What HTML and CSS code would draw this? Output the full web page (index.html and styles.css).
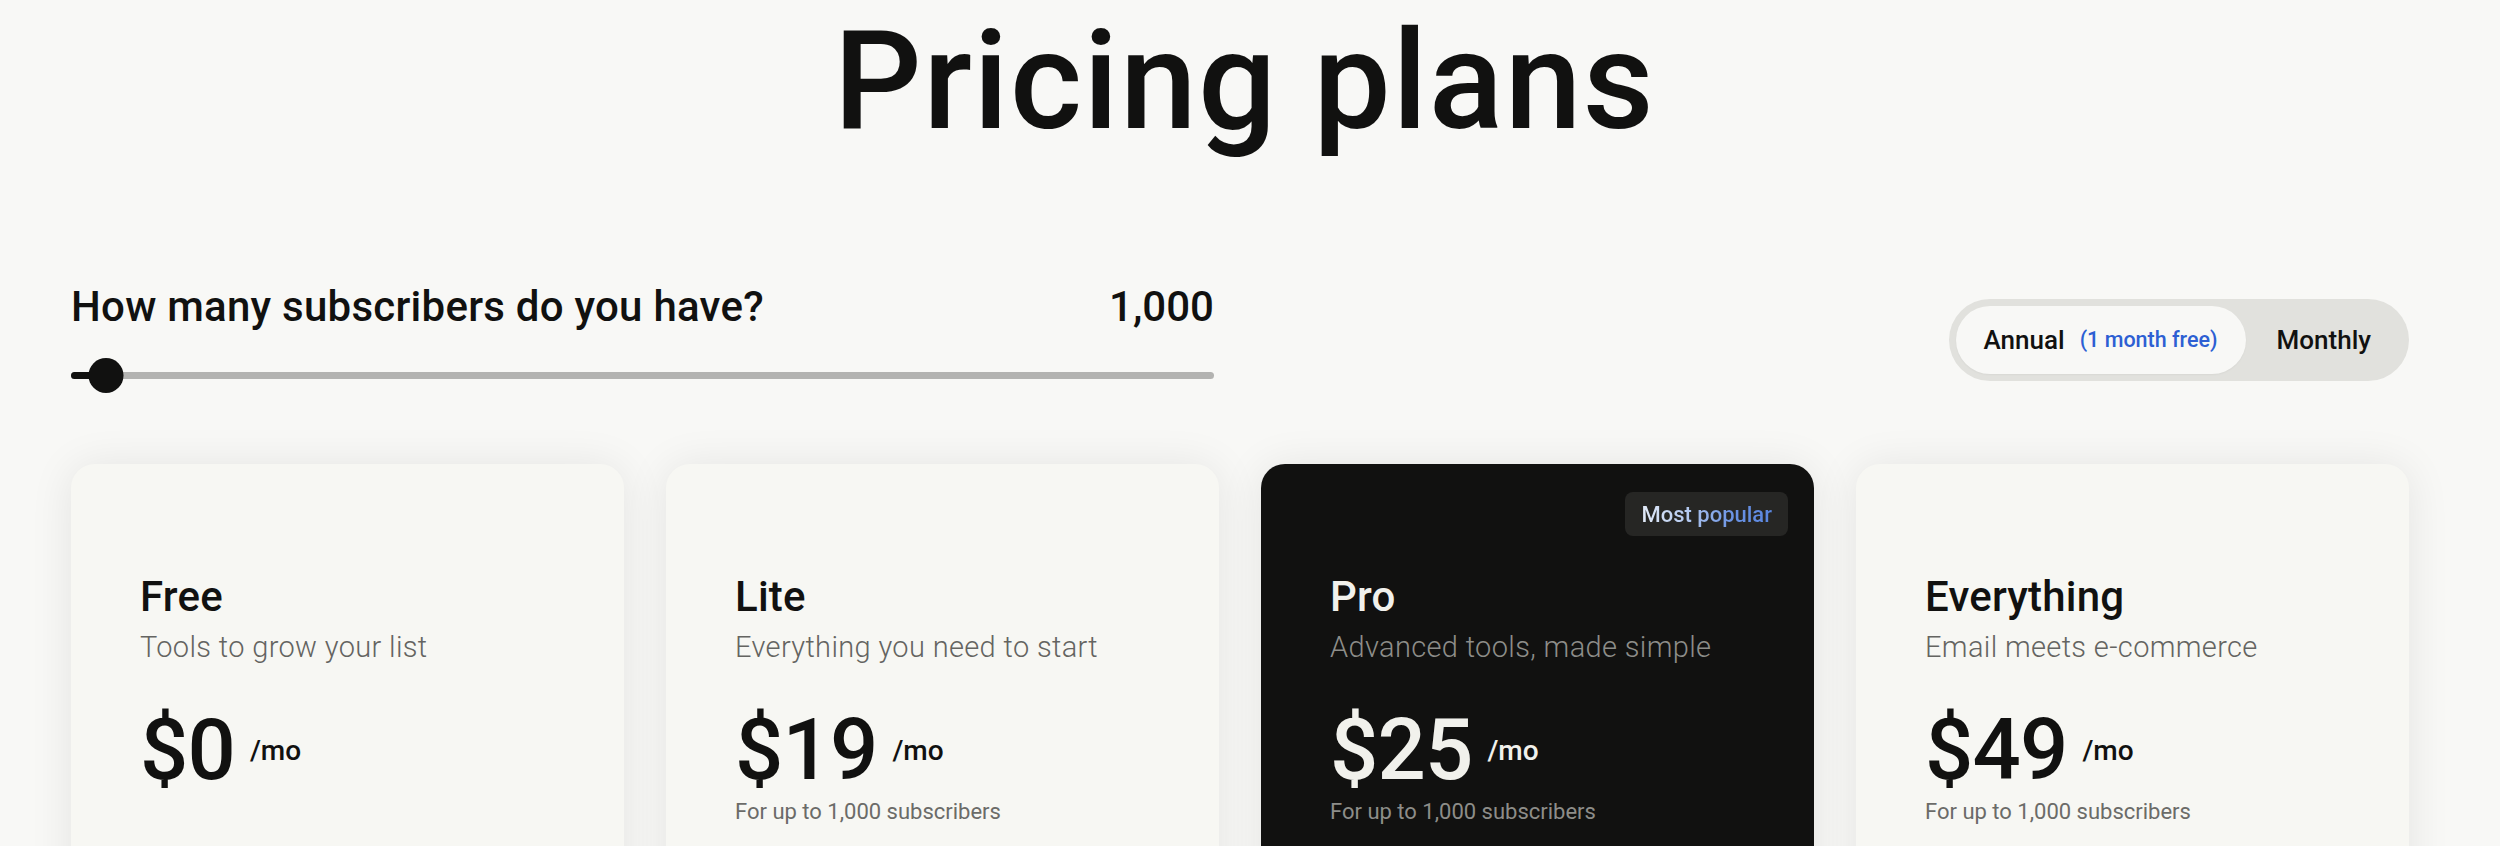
FILE: index.html
```html
<!DOCTYPE html>
<html lang="en">
<head>
<meta charset="utf-8">
<title>Pricing plans</title>
<link rel="stylesheet" href="styles.css">
</head>
<body>
<main class="page">
  <h1 class="title">Pricing plans</h1>

  <section class="controls">
    <div class="subs">
      <div class="subs-head">
        <span class="subs-q">How many subscribers do you have?</span>
        <span class="subs-count">1,000</span>
      </div>
      <div class="slider">
        <div class="track"><div class="fill" style="width:35px"></div></div>
        <div class="thumb" style="left:35px"></div>
      </div>
    </div>

    <div class="billing">
      <button class="bill-opt active">Annual <span class="bill-note">(1 month free)</span></button>
      <button class="bill-opt">Monthly</button>
    </div>
  </section>

  <section class="plans">
    <article class="plan">
      <h2 class="plan-name">Free</h2>
      <p class="plan-desc">Tools to grow your list</p>
      <div class="price"><span class="amount">$0</span><span class="per">/mo</span></div>
    </article>

    <article class="plan">
      <h2 class="plan-name">Lite</h2>
      <p class="plan-desc">Everything you need to start</p>
      <div class="price"><span class="amount">$19</span><span class="per">/mo</span></div>
      <p class="plan-note">For up to 1,000 subscribers</p>
    </article>

    <article class="plan plan-dark">
      <span class="badge"><span class="badge-text">Most popular</span></span>
      <h2 class="plan-name">Pro</h2>
      <p class="plan-desc">Advanced tools, made simple</p>
      <div class="price"><span class="amount">$25</span><span class="per">/mo</span></div>
      <p class="plan-note">For up to 1,000 subscribers</p>
    </article>

    <article class="plan">
      <h2 class="plan-name">Everything</h2>
      <p class="plan-desc">Email meets e-commerce</p>
      <div class="price"><span class="amount">$49</span><span class="per">/mo</span></div>
      <p class="plan-note">For up to 1,000 subscribers</p>
    </article>
  </section>
</main>
</body>
</html>
```

FILE: styles.css
```css
* { box-sizing: border-box; }

html, body {
  margin: 0;
  background: #f8f8f6;
  overflow: hidden;
}

body {
  font-family: Roboto, "Liberation Sans", Arial, sans-serif;
  color: #111110;
}

.page {
  width: 2338px;
  margin-left: 71px;
  padding-top: 12px;
}

.title {
  margin: 0;
  font-size: 138px;
  font-weight: 500;
  line-height: 1;
  text-align: center;
  letter-spacing: 0.01em;
  padding-left: 9px;
}

/* controls */
.controls {
  margin-top: 136px;
  display: flex;
  justify-content: space-between;
  align-items: center;
}

.subs {
  width: 1143px;
}

.subs-head {
  display: flex;
  justify-content: space-between;
  font-size: 42px;
  font-weight: 500;
  line-height: 1;
}

.subs-q {
  letter-spacing: 0.006em;
}

.slider {
  position: relative;
  margin-top: 30px;
  height: 35px;
  display: flex;
  align-items: center;
}

.track {
  width: 100%;
  height: 7px;
  border-radius: 4px;
  background: #b3b3b1;
  overflow: hidden;
}

.fill {
  height: 100%;
  background: #111110;
}

.thumb {
  position: absolute;
  top: 0;
  width: 35px;
  height: 35px;
  border-radius: 50%;
  background: #111110;
  transform: translateX(-50%);
}

.billing {
  display: flex;
  align-items: stretch;
  height: 82px;
  padding: 7px;
  border-radius: 41px;
  background: #e1e1dd;
}

.bill-opt {
  border: 0;
  background: transparent;
  font-family: inherit;
  font-size: 26px;
  font-weight: 500;
  color: #111110;
  display: flex;
  align-items: center;
  padding: 0 31px;
  border-radius: 34px;
}

.bill-opt.active {
  background: #f8f8f6;
  padding: 0 28px 0 28px;
  gap: 15px;
  box-shadow: 0 1px 2px rgba(0,0,0,0.04);
}

.bill-note {
  font-size: 21.5px;
  font-weight: 500;
  color: #2d5fd3;
}

/* plans */
.plans {
  margin-top: 71px;
  display: grid;
  grid-template-columns: repeat(4, 1fr);
  gap: 42px;
}

.plan {
  position: relative;
  min-height: 520px;
  padding: 112px 40px 0 69px;
  border-radius: 24px;
  background: #f7f7f3;
  box-shadow: 0 2px 44px rgba(0,0,0,0.085);
}

.plan-name {
  margin: 0;
  font-size: 42px;
  font-weight: 500;
  line-height: 1;
  letter-spacing: 0.005em;
}

.plan-desc {
  margin: 15px 0 0;
  font-size: 29px;
  font-weight: 300;
  line-height: 1;
  letter-spacing: 0.012em;
  color: #646461;
}

.price {
  margin-top: 46px;
  display: flex;
  align-items: center;
  gap: 15px;
}

.amount {
  font-size: 85px;
  font-weight: 500;
  line-height: 1;
  letter-spacing: -0.01em;
}

.per {
  font-size: 28px;
  font-weight: 500;
  line-height: 1;
}

.plan-note {
  margin: 8px 0 0;
  font-size: 22px;
  font-weight: 400;
  line-height: 1;
  color: #6b6b68;
}

.plan-dark {
  background: #111110;
  color: #f1f1ec;
}

.plan-dark .plan-desc,
.plan-dark .plan-note {
  color: #8d8d89;
}

.badge {
  position: absolute;
  top: 28px;
  right: 26px;
  height: 44px;
  padding: 0 16px;
  border-radius: 8px;
  background: #262624;
  display: flex;
  align-items: center;
}

.badge-text {
  font-size: 22px;
  font-weight: 500;
  background: linear-gradient(90deg, #e3ebf8 0%, #b4c9ef 35%, #6a93e4 70%, #5a86df 100%);
  -webkit-background-clip: text;
  background-clip: text;
  color: transparent;
}
```
